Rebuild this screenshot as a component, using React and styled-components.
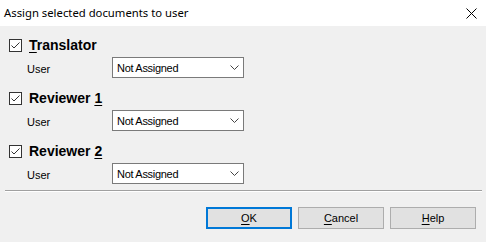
import React from "react";
import styled, { createGlobalStyle } from "styled-components";

const Global = createGlobalStyle`
  html, body { margin: 0; padding: 0; background: #ffffff; }
  body { font-family: "Liberation Sans", Arial, sans-serif; }
`;

const Window = styled.div`
  width: 486px;
  height: 242px;
  background: #f0f0f0;
  display: flex;
  flex-direction: column;
  box-sizing: border-box;
`;

const TitleBar = styled.div`
  height: 26px;
  background: #ffffff;
  display: flex;
  align-items: center;
  justify-content: space-between;
  padding: 0 9px 0 4px;
  flex-shrink: 0;
`;

const Title = styled.span`
  font-family: "Noto Sans", "Open Sans", sans-serif;
  font-size: 11.3px;
  color: #000;
  line-height: 1;
  padding-bottom: 1px;
`;

const CloseIcon = styled.svg`
  width: 11px;
  height: 11px;
  display: block;
`;

const Content = styled.div`
  display: flex;
  flex-direction: column;
  padding: 13px 0 0 9px;
  gap: 14px;
`;

const Section = styled.div`
  display: flex;
  flex-direction: column;
  gap: 5px;
`;

const Heading = styled.label`
  display: flex;
  align-items: center;
  gap: 7px;
  height: 13px;
`;

const Box = styled.span`
  width: 13px;
  height: 13px;
  box-sizing: border-box;
  border: 1px solid #333333;
  background: #ffffff;
  display: flex;
  align-items: center;
  justify-content: center;
`;

const HeadingText = styled.span`
  font-family: "Liberation Sans", Arial, sans-serif;
  font-weight: bold;
  font-size: 14px;
  color: #000;
  line-height: 13px;
`;

const Mn = styled.span`
  text-decoration: underline;
  text-underline-offset: 2px;
`;

const FieldRow = styled.div`
  display: flex;
  align-items: center;
  padding-left: 18px;
`;

const FieldLabel = styled.span`
  width: 85px;
  font-size: 11px;
  color: #000;
  padding-top: 2px;
`;

const Select = styled.div`
  width: 132px;
  height: 21px;
  box-sizing: border-box;
  border: 1px solid #7a7a7a;
  background: #ffffff;
  display: flex;
  align-items: center;
  justify-content: space-between;
  padding: 0 4px 0 4px;
  font-size: 11px;
  letter-spacing: -0.3px;
  color: #000;
`;

const Chevron = styled.svg`
  width: 9px;
  height: 5px;
  display: block;
`;

const Separator = styled.div`
  margin: 6px 4px 0 5px;
  border-top: 1px solid #a0a0a0;
  border-bottom: 1px solid #ffffff;
`;

const Buttons = styled.div`
  display: flex;
  justify-content: flex-end;
  gap: 6px;
  padding: 15px 10px 0 0;
`;

const Button = styled.div`
  width: 86px;
  height: 22px;
  box-sizing: border-box;
  background: #e1e1e1;
  border: ${(p) => (p.$default ? "2px solid #0078d7" : "1px solid #adadad")};
  display: flex;
  align-items: center;
  justify-content: center;
  font-size: 11px;
  color: #000;
`;

const Check = () => (
  <svg width="11" height="11" viewBox="0 0 11 11">
    <path d="M1.5 5.5 L4 8 L9.5 2.5" fill="none" stroke="#333" strokeWidth="1" />
  </svg>
);

const sections = [
  { pre: "", mn: "T", post: "ranslator" },
  { pre: "Reviewer ", mn: "1", post: "" },
  { pre: "Reviewer ", mn: "2", post: "" },
];

export default function App() {
  return (
    <>
      <Global />
      <Window>
        <TitleBar>
          <Title>Assign selected documents to user</Title>
          <CloseIcon viewBox="0 0 11 11">
            <path d="M0.5 0.5 L10.5 10.5 M10.5 0.5 L0.5 10.5" stroke="#000" strokeWidth="1" />
          </CloseIcon>
        </TitleBar>
        <Content>
          {sections.map((s, i) => (
            <Section key={i}>
              <Heading>
                <Box>
                  <Check />
                </Box>
                <HeadingText>
                  {s.pre}
                  <Mn>{s.mn}</Mn>
                  {s.post}
                </HeadingText>
              </Heading>
              <FieldRow>
                <FieldLabel>User</FieldLabel>
                <Select>
                  <span>Not Assigned</span>
                  <Chevron viewBox="0 0 9 5">
                    <path d="M0.5 0.5 L4.5 4.5 L8.5 0.5" fill="none" stroke="#444" strokeWidth="1" />
                  </Chevron>
                </Select>
              </FieldRow>
            </Section>
          ))}
        </Content>
        <Separator />
        <Buttons>
          <Button $default>
            <span><Mn>O</Mn>K</span>
          </Button>
          <Button>
            <span><Mn>C</Mn>ancel</span>
          </Button>
          <Button>
            <span><Mn>H</Mn>elp</span>
          </Button>
        </Buttons>
      </Window>
    </>
  );
}
